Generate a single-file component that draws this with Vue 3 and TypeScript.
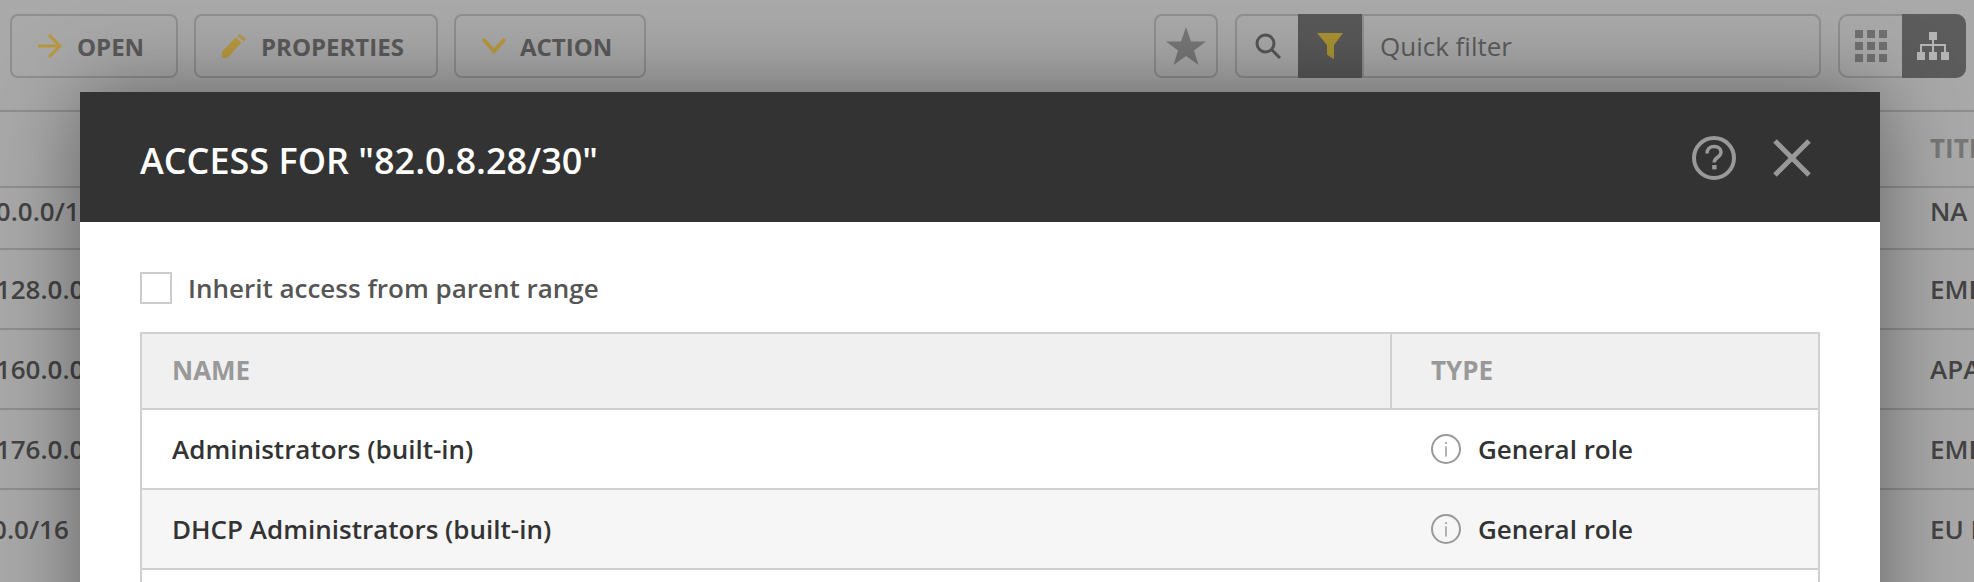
<script setup lang="ts">
const ranges = [
  { cidr: '10.0.0.0/16', title: 'NA network' },
  { cidr: '10.128.0.0/16', title: 'EMEA network' },
  { cidr: '10.160.0.0/16', title: 'APAC network' },
  { cidr: '10.176.0.0/16', title: 'EMEA network' },
  { cidr: '\u00a0\u20092.0.0/16', title: 'EU IP network' },
]

const roles = [
  { name: 'Administrators (built-in)', type: 'General role' },
  { name: 'DHCP Administrators (built-in)', type: 'General role' },
]
</script>

<template>
  <div class="page">
    <header class="toolbar">
      <button class="btn btn--open">
        <svg class="btn__icon" viewBox="0 0 24 24" fill="none" stroke="currentColor" stroke-width="3">
          <path d="M0 12h22M11 1l11 11-11 11" />
        </svg>
        OPEN
      </button>
      <button class="btn btn--props">
        <svg class="btn__icon" viewBox="0 0 24 24" fill="currentColor">
          <path d="M0 24v-6L13.500 3.500l6 5L5.500 24zM15.500 2l2-2 6.500 5-2 2.500z" />
        </svg>
        PROPERTIES
      </button>
      <button class="btn btn--action">
        <svg class="btn__icon" viewBox="0 0 24 24" fill="none" stroke="currentColor" stroke-width="4">
          <path d="M1 5l11 12L23 5" />
        </svg>
        ACTION
      </button>

      <div class="toolbar__right">
        <button class="square">
          <svg class="star" viewBox="0 0 40 38" fill="currentColor">
            <path d="M20 0l5 14.500h15L28 23.500 32.500 38 20 29 7.500 38 12 23.500 0 14.500h15z" />
          </svg>
        </button>
        <div class="search">
          <span class="search__cell">
            <svg width="26" height="26" viewBox="0 0 26 26" fill="none" stroke="currentColor" stroke-width="3">
              <circle cx="10.500" cy="10.500" r="8.500" />
              <path d="M16.500 16.500 25 25" />
            </svg>
          </span>
          <span class="search__cell search__cell--active">
            <svg width="26" height="26" viewBox="0 0 26 26" fill="currentColor">
              <path d="M0 0h26L17 12v14l-3-1.500-4-3V12z" />
            </svg>
          </span>
          <span class="search__input">Quick filter</span>
        </div>
        <div class="views">
          <span class="views__cell">
            <svg width="32" height="32" viewBox="0 0 32 32" fill="currentColor">
              <path d="M0 0h8v8H0zM12 0h8v8h-8zM24 0h8v8h-8zM0 12h8v8H0zM12 12h8v8h-8zM24 12h8v8h-8zM0 24h8v8H0zM12 24h8v8h-8zM24 24h8v8h-8z" />
            </svg>
          </span>
          <span class="views__cell views__cell--active">
            <svg width="32" height="28" viewBox="0 0 32 28" fill="currentColor">
              <path d="M12 0h8v8h-8zM0 20h8v8H0zM12 20h8v8h-8zM24 20h8v8h-8z" />
              <path d="M15 8h2v4h12v8h-2v-6H17v6h-2v-6H5v6H3v-8h12z" />
            </svg>
          </span>
        </div>
      </div>
    </header>

    <section class="ranges">
      <div class="ranges__head">
        <span class="ranges__divider"></span>
        <span class="ranges__title">TITLE</span>
      </div>
      <div v-for="(item, i) in ranges" :key="i" class="ranges__row" :class="{ 'ranges__row--first': i === 0 }">
        <span class="ranges__cidr">{{ item.cidr }}</span>
        <span class="ranges__name">{{ item.title }}</span>
      </div>
    </section>

    <div class="modal">
      <div class="modal__header">
        <h2 class="modal__title">ACCESS FOR "82.0.8.28/30"</h2>
        <div class="modal__tools">
          <svg width="44" height="44" viewBox="0 0 44 44" fill="none" stroke="currentColor">
            <circle cx="22" cy="22" r="20" stroke-width="4" />
            <path d="M15 17.500c0-4.500 3-7 7.200-7 4 0 6.800 2.300 6.800 5.800 0 5.200-6.800 4.800-6.800 10.200" stroke-width="3.500" />
            <path d="M20.200 29h4.400v4.400h-4.400z" fill="currentColor" stroke="none" />
          </svg>
          <svg width="38" height="38" viewBox="0 0 38 38" fill="none" stroke="currentColor" stroke-width="5">
            <path d="M2 2l34 34M36 2 2 36" />
          </svg>
        </div>
      </div>

      <div class="modal__body">
        <label class="inherit">
          <span class="inherit__box"></span>
          Inherit access from parent range
        </label>

        <div class="acl">
          <div class="acl__head">
            <div class="acl__cell acl__cell--name">NAME</div>
            <div class="acl__cell acl__cell--type">TYPE</div>
          </div>
          <div v-for="role in roles" :key="role.name" class="acl__row">
            <div class="acl__cell acl__cell--name">{{ role.name }}</div>
            <div class="acl__cell acl__cell--type">
              <svg class="acl__info" viewBox="0 0 30 30" fill="none" stroke="#999" stroke-width="2">
                <circle cx="15" cy="15" r="14" />
                <path d="M15 12.500v10" stroke-width="1.500" />
                <path d="M15 8v2" stroke-width="1.500" />
              </svg>
              {{ role.type }}
            </div>
          </div>
          <div class="acl__row"></div>
        </div>
      </div>
    </div>
  </div>
</template>

<style>
html,
body {
  margin: 0;
  background: #a9a9a9;
}
</style>

<style scoped>
.page {
  position: relative;
  width: 1974px;
  height: 582px;
  overflow: hidden;
  background: #a9a9a9;
  font-family: "Open Sans", "Noto Sans", sans-serif;
}

.toolbar {
  display: flex;
  height: 64px;
  padding: 14px 8px 0 10px;
  gap: 16px;
}

.toolbar__right {
  display: flex;
  gap: 17px;
  margin-left: auto;
}

.btn {
  display: flex;
  align-items: center;
  height: 64px;
  box-sizing: border-box;
  border: 2px solid #8f8f8f;
  border-radius: 8px;
  background: transparent;
  color: #5a5a5a;
  font: 700 24px "Open Sans", sans-serif;
  gap: 15px;
  padding: 0 0 0 26px;
}

.btn--open {
  width: 168px;
}

.btn--props {
  width: 244px;
}

.btn--action {
  width: 192px;
  gap: 14px;
}

.btn__icon {
  width: 24px;
  height: 24px;
  flex-shrink: 0;
  color: #b9993f;
}

.square {
  display: flex;
  align-items: center;
  justify-content: center;
  width: 64px;
  height: 64px;
  box-sizing: border-box;
  border: 2px solid #8f8f8f;
  border-radius: 8px;
  background: transparent;
  padding: 0;
  color: #777;
}

.star {
  width: 40px;
  height: 38px;
}

.search {
  display: flex;
  width: 586px;
  height: 64px;
  box-sizing: border-box;
  border: 2px solid #8f8f8f;
  border-radius: 8px;
}

.search__cell {
  display: flex;
  align-items: center;
  justify-content: center;
  width: 61px;
  margin: -2px 0;
  color: #565656;
}

.search__cell--active {
  width: 64px;
  background: #585858;
  color: #a89232;
}

.search__input {
  flex: 1;
  display: flex;
  align-items: center;
  border-left: 2px solid #8f8f8f;
  padding-left: 16px;
  color: #5c5c5c;
  font-size: 26px;
}

.views {
  display: flex;
  width: 128px;
  height: 64px;
  box-sizing: border-box;
  border: 2px solid #8f8f8f;
  border-radius: 10px;
}

.views__cell {
  display: flex;
  align-items: center;
  justify-content: center;
  flex: 1;
  color: #707070;
}

.views__cell--active {
  margin: -2px -2px -2px 0;
  padding-right: 2px;
  border-radius: 0 10px 10px 0;
  background: #5c5c5c;
  color: #b5b5b5;
}

.ranges {
  margin-top: 32px;
  border-top: 2px solid #8e8e8e;
}

.ranges__head {
  display: flex;
  height: 74px;
}

.ranges__divider {
  margin-left: 1888px;
  width: 2px;
  background: #8e8e8e;
}

.ranges__title {
  margin-left: 42px;
  line-height: 72px;
  color: #777;
  font-size: 26px;
  font-weight: 700;
}

.ranges__row {
  display: flex;
  align-items: center;
  height: 78px;
  border-top: 2px solid #8e8e8e;
  color: #444;
  font-size: 26px;
  font-weight: 600;
  white-space: nowrap;
}

.ranges__row--first {
  box-sizing: border-box;
  height: 62px;
  padding-bottom: 14px;
}

.ranges__cidr {
  flex-shrink: 0;
  width: 1971px;
  margin-left: -41px;
}

.modal {
  position: absolute;
  left: 80px;
  top: 92px;
  width: 1800px;
  height: 600px;
  background: #fff;
  box-shadow: 0 0 80px rgba(0, 0, 0, 0.42);
}

.modal__header {
  display: flex;
  align-items: center;
  justify-content: space-between;
  height: 130px;
  padding: 0 69px 0 60px;
  background: #333;
  color: #fff;
}

.modal__title {
  margin: 6px 0 0;
  font-size: 36px;
  font-weight: 600;
}

.modal__tools {
  display: flex;
  align-items: center;
  gap: 37px;
  margin-top: 2px;
  color: #999;
}

.modal__body {
  padding: 50px 60px 0;
}

.inherit {
  display: flex;
  align-items: center;
  gap: 16px;
  height: 32px;
  color: #555;
  font-size: 26px;
  font-weight: 600;
}

.inherit__box {
  width: 32px;
  height: 32px;
  box-sizing: border-box;
  border: 2px solid #ccc;
}

.acl {
  margin-top: 28px;
  border: 2px solid #d0d0d0;
  border-bottom: 0;
}

.acl__head,
.acl__row {
  display: grid;
  grid-template-columns: 1248px 1fr;
  height: 78px;
  border-bottom: 2px solid #d0d0d0;
}

.acl__head {
  height: 74px;
  background: #f0f0f0;
  color: #999;
  font-size: 26px;
  font-weight: 700;
}

.acl__head .acl__cell {
  padding-bottom: 3px;
}

.acl__row:nth-child(odd) {
  background: #f6f6f6;
}

.acl__row {
  color: #333;
  font-size: 26px;
  font-weight: 600;
}

.acl__cell {
  display: flex;
  align-items: center;
  box-sizing: border-box;
}

.acl__cell--name {
  padding-left: 30px;
}

.acl__cell--type {
  padding-left: 41px;
  gap: 17px;
}

.acl__head .acl__cell--type {
  border-left: 2px solid #d0d0d0;
  padding-left: 39px;
}

.acl__info {
  width: 30px;
  height: 30px;
}
</style>
